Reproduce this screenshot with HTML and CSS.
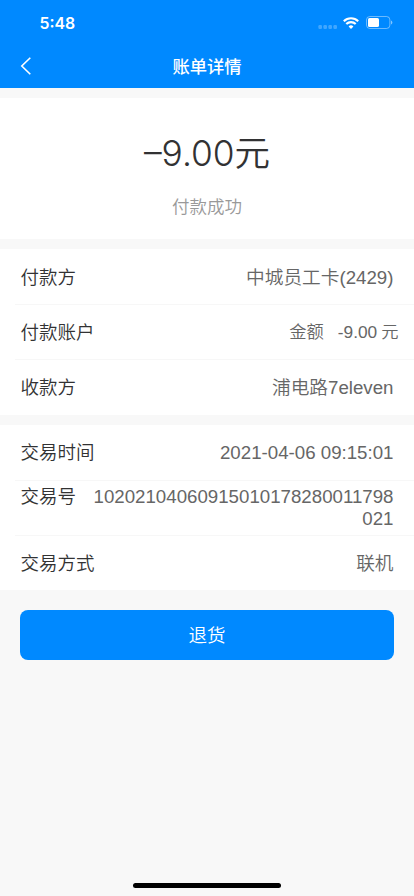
FILE: index.html
```html
<!DOCTYPE html>
<html lang="zh-CN">
<head>
<meta charset="utf-8">
<title>账单详情</title>
<link rel="stylesheet" href="styles.css">
</head>
<body>
<header class="header">
  <div class="status">
    <span class="time">5:48</span>
    <div class="status-icons">
      <svg class="dots" width="20" height="6" viewBox="0 0 20 6"><g fill="#fff" opacity=".25"><rect x=".4" y="1" width="3.6" height="4" rx="1.2"/><rect x="5.4" y="1" width="3.6" height="4" rx="1.2"/><rect x="10.4" y="1" width="3.6" height="4" rx="1.2"/><rect x="15.4" y="1" width="3.6" height="4" rx="1.2"/></g></svg>
      <svg class="wifi" width="16" height="12" viewBox="0 0 16 12"><g fill="none" stroke="#fff" stroke-width="2.1"><path d="M.8 4.3a10.2 10.2 0 0 1 14.4 0"/><path d="M3.3 7.1a6.6 6.6 0 0 1 9.4 0"/></g><path d="M8 12 5.6 9.5a3.4 3.4 0 0 1 4.8 0z" fill="#fff"/></svg>
      <svg class="battery" width="27" height="13" viewBox="0 0 27 13"><rect x=".5" y=".5" width="23.4" height="12" rx="3.4" fill="none" stroke="#fff" opacity=".42"/><rect x="2" y="2" width="11" height="9" rx="1.6" fill="#fff"/><path d="M25 4.4a2.3 2.3 0 0 1 0 4.2z" fill="#fff" opacity=".5"/></svg>
    </div>
  </div>
  <div class="nav">
    <svg class="back" width="12" height="20" viewBox="0 0 12 20"><path d="M10.3 1.7 1.8 10l8.5 8.3" fill="none" stroke="#fff" stroke-width="1.6"/></svg>
    <h1 class="title">账单详情</h1>
  </div>
</header>
<main class="content">
  <section class="summary">
    <div class="amount">–9.00<span class="yuan">元</span></div>
    <div class="result">付款成功</div>
  </section>
  <section class="group">
    <div class="row"><span>付款方</span><span class="value">中城员工卡(2429)</span></div>
    <div class="row"><span>付款账户</span><span class="value balance"><span>金额</span><span>-9.00<span class="unit">元</span></span></span></div>
    <div class="row"><span>收款方</span><span class="value">浦电路7eleven</span></div>
  </section>
  <section class="group">
    <div class="row"><span>交易时间</span><span class="value">2021-04-06 09:15:01</span></div>
    <div class="row long"><span>交易号</span><span class="value">10202104060915010178280011798<br>021</span></div>
    <div class="row"><span>交易方式</span><span class="value">联机</span></div>
  </section>
  <button class="refund">退货</button>
</main>
<div class="home"></div>
</body>
</html>
```
FILE: styles.css
```css
* { box-sizing: border-box; }
body {
  margin: 0;
  height: 896px;
  overflow: hidden;
  display: flex;
  flex-direction: column;
  background: #f8f8f8;
  color: #323233;
  font-family: "Liberation Sans", "Noto Sans CJK SC", sans-serif;
  font-weight: 350;
}
.header { height: 88px; background: #0089ff; color: #fff; }
.status { height: 44px; padding: 2px 21px 0 39.5px; display: flex; align-items: center; justify-content: space-between; }
.time { padding-top: 1px; font: 600 15.8px/20px Inter, sans-serif; }
.status-icons { display: flex; align-items: center; margin-top: -1px; }
.dots { margin: 8px 5px 0 0; }
.wifi { margin-right: 7px; }
.nav { height: 44px; padding: 0 20px; display: grid; grid-template-columns: 12px 1fr 12px; align-items: center; }
.title { margin: 0; padding-top: 2px; font-size: 17.3px; font-weight: 500; line-height: 24px; text-align: center; }
.content { flex: 1; padding-top: 10px; }
.summary { height: 141px; background: #fff; text-align: center; }
.amount { padding-top: 31px; font-family: Inter, "Noto Sans CJK SC", sans-serif; font-size: 35.3px; font-weight: 330; line-height: 50px; }
.yuan { font-size: 35.5px; font-weight: 350; }
.result { margin-top: 15px; font-size: 17.5px; line-height: 26px; color: #999; }
.group { margin-top: 10px; background: #fff; font-size: 18.5px; }
.row { height: 55.2px; padding: 2px 20.5px 0; display: flex; align-items: center; justify-content: space-between; position: relative; line-height: 22px; }
.row + .row::before { content: ""; position: absolute; top: 0; left: 15px; right: 0; height: 1px; background: #f7f7f7; }
.value { color: #666; font-size: 18.7px; text-align: right; }
.balance { display: flex; gap: 14px; margin-right: -5px; font-size: 17.3px; line-height: 20px; padding-bottom: 1px; }
.unit { margin-left: 4px; }
.long { align-items: flex-start; padding-top: 6px; }
.refund { display: block; width: 374px; height: 50px; margin: 20px auto 0; padding: 2px 0 0; border: 0; border-radius: 8px; background: #0089ff; color: #fff; font: inherit; font-size: 18.5px; line-height: 48px; }
.home { width: 148px; height: 5px; margin: 0 auto 8px; border-radius: 3px; background: #000; }
```
